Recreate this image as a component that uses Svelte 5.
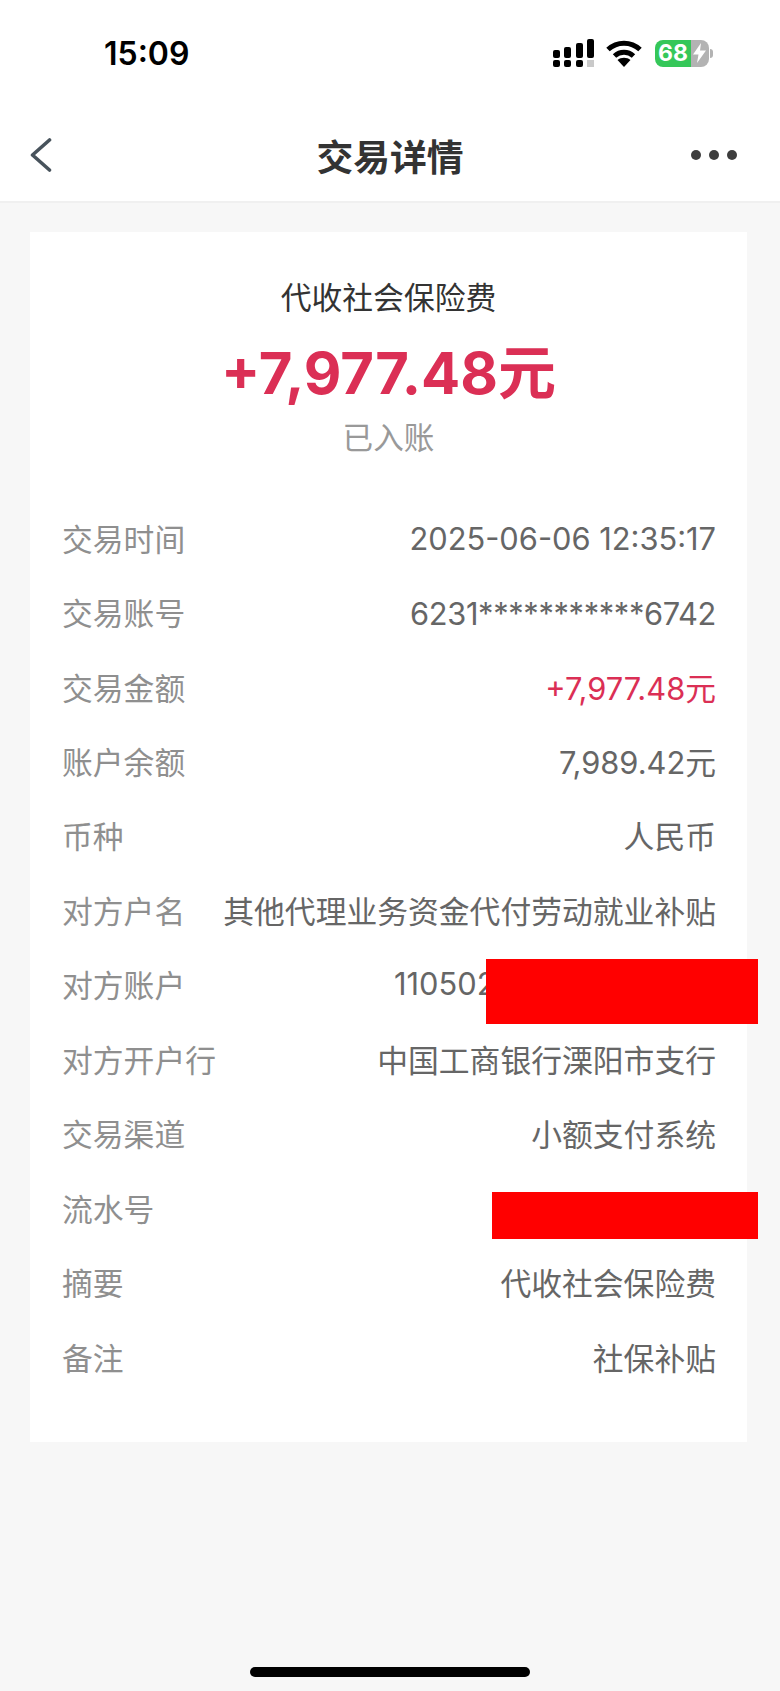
<script>
  const rows = [
    { label: '交易时间', value: '2025-06-06 12:35:17', num: true },
    { label: '交易账号', value: '6231***********6742', num: true, tight: true },
    { label: '交易金额', value: '+7,977.48元', red: true },
    { label: '账户余额', value: '7,989.42元' },
    { label: '币种', value: '人民币' },
    { label: '对方户名', value: '其他代理业务资金代付劳动就业补贴' },
    { label: '对方账户', value: '110502', mask: 'mask-account' },
    { label: '对方开户行', value: '中国工商银行溧阳市支行' },
    { label: '交易渠道', value: '小额支付系统' },
    { label: '流水号', value: '', mask: 'mask-serial' },
    { label: '摘要', value: '代收社会保险费' },
    { label: '备注', value: '社保补贴' }
  ];
</script>

<div class="page">
  <header class="top">
    <div class="status">
      <span class="time">15:09</span>
      <div class="status-icons">
        <svg width="42" height="28" viewBox="0 0 42 28" fill="#000">
          <rect x="0" y="11" width="7" height="8" rx="2" />
          <rect x="11" y="8" width="7" height="11" rx="2" />
          <rect x="23" y="4" width="7" height="15" rx="2" />
          <rect x="34" y="0" width="7" height="19" rx="2" />
          <rect x="0" y="21" width="7" height="7" rx="2" />
          <rect x="11" y="21" width="7" height="7" rx="2" />
          <rect x="23" y="21" width="7" height="7" rx="2" />
          <rect x="34" y="21" width="7" height="7" fill="#c9c9c9" />
        </svg>
        <svg class="wifi" width="36" height="27" viewBox="0 0 36 27" fill="none" stroke="#000" stroke-width="5">
          <path d="M2 9.5 C11 1 25 1 34 9.5" />
          <path d="M8.5 16 C14 11 22 11 27.5 16" />
          <path d="M18 27 L11.5 20 C15 17 21 17 24.5 20 Z" fill="#000" stroke="none" />
        </svg>
        <div class="battery">
          <div class="cell">
            <span class="pct">68</span>
            <svg class="bolt" width="13" height="20" viewBox="0 0 13 20" fill="#fff"><path d="M8 0 L0 11.5 H5.5 L4 20 L13 7.5 H7 Z" /></svg>
          </div>
          <div class="nub"></div>
        </div>
      </div>
    </div>
    <nav class="bar">
      <svg class="back" width="22" height="34" viewBox="0 0 22 34" fill="none" stroke="#48535c" stroke-width="3.6" stroke-linecap="round" stroke-linejoin="round">
        <path d="M19.5 2 L2.5 17 L19.5 32" />
      </svg>
      <h1>交易详情</h1>
      <div class="more"><i></i><i></i><i></i></div>
    </nav>
  </header>

  <main class="card">
    <section class="summary">
      <div class="name">代收社会保险费</div>
      <div class="amount">+7,977.48<span class="unit">元</span></div>
      <div class="state">已入账</div>
    </section>
    <section class="rows">
      {#each rows as row}
        <div class="row">
          <span class="label">{row.label}</span>
          <span class="value" class:red={row.red} class:num={row.num} class:tight={row.tight} class:masked={row.mask}>{row.value}</span>
          {#if row.mask}<div class="mask {row.mask}"></div>{/if}
        </div>
      {/each}
    </section>
  </main>

  <div class="home"></div>
</div>

<style>
  :global(body) {
    margin: 0;
    background: #f7f7f7;
  }
  .page {
    position: relative;
    width: 780px;
    height: 1691px;
    overflow: hidden;
    background: #f7f7f7;
    font-family: Inter, "Noto Sans CJK SC", sans-serif;
  }
  .top {
    background: #fff;
    height: 201px;
    border-bottom: 2px solid #f0f0f0;
  }
  .status {
    height: 106px;
    display: flex;
    align-items: center;
    justify-content: space-between;
    padding: 0 67px 0 104px;
  }
  .time {
    font-size: 32px;
    font-weight: 600;
    color: #000;
  }
  .status-icons {
    display: flex;
    align-items: center;
    gap: 11px;
  }
  .wifi {
    margin-right: 2px;
  }
  .battery {
    display: flex;
    align-items: center;
    gap: 1px;
  }
  .cell {
    width: 54px;
    height: 27px;
    border-radius: 8px;
    background: linear-gradient(to right, #35c759 0 36px, #b3b3b3 36px);
    display: flex;
    align-items: center;
    color: #fff;
    font-size: 23px;
    font-weight: 700;
  }
  .pct {
    width: 36px;
    text-align: center;
  }
  .bolt {
    margin-left: 2px;
  }
  .nub {
    width: 3px;
    height: 9px;
    border-radius: 0 3px 3px 0;
    background: #b3b3b3;
  }
  .bar {
    height: 95px;
    display: grid;
    grid-template-columns: 1fr auto 1fr;
    align-items: center;
    padding: 0 30px;
  }
  .bar h1 {
    margin: 2px 0 0;
    font-size: 36.8px;
    font-weight: 700;
    color: #333;
  }
  .back {
    margin-top: 2px;
  }
  .more {
    display: flex;
    justify-content: flex-end;
    gap: 8px;
    margin: 2px 13px 0 0;
  }
  .more i {
    width: 10px;
    height: 10px;
    border-radius: 50%;
    background: #3d3d3d;
  }
  .card {
    margin: 29px 33px 0 30px;
    height: 1210px;
    background: #fff;
    box-sizing: border-box;
    padding-top: 44px;
  }
  .summary {
    text-align: center;
  }
  .name {
    font-size: 30.8px;
    line-height: 44px;
    color: #333;
  }
  .amount {
    font-size: 58px;
    line-height: 66px;
    margin-top: 20px;
    font-weight: 700;
    color: #db2f55;
  }
  .state {
    font-size: 30.6px;
    line-height: 44px;
    margin-top: 10px;
    color: #999;
  }
  .rows {
    margin-top: 40px;
    padding: 0 31px 0 32px;
  }
  .row {
    position: relative;
    height: 74.45px;
    display: flex;
    align-items: center;
    justify-content: space-between;
    font-size: 30.8px;
  }
  .label {
    color: #8f8f8f;
    flex: none;
  }
  .value {
    color: #666;
    white-space: nowrap;
  }
  .value.num {
    margin-top: 3px;
  }
  .value.tight {
    letter-spacing: -0.35px;
  }
  .value.red {
    color: #db2f55;
  }
  .value.masked {
    position: absolute;
    left: 332px;
  }
  .mask {
    position: absolute;
    background: #f00;
  }
  .mask-account {
    left: 424px;
    right: -42px;
    top: 12px;
    height: 65px;
  }
  .mask-serial {
    left: 430px;
    right: -42px;
    top: 22px;
    height: 47px;
  }
  .home {
    position: absolute;
    left: 250px;
    bottom: 14px;
    width: 280px;
    height: 10px;
    border-radius: 5px;
    background: #000;
  }
</style>
